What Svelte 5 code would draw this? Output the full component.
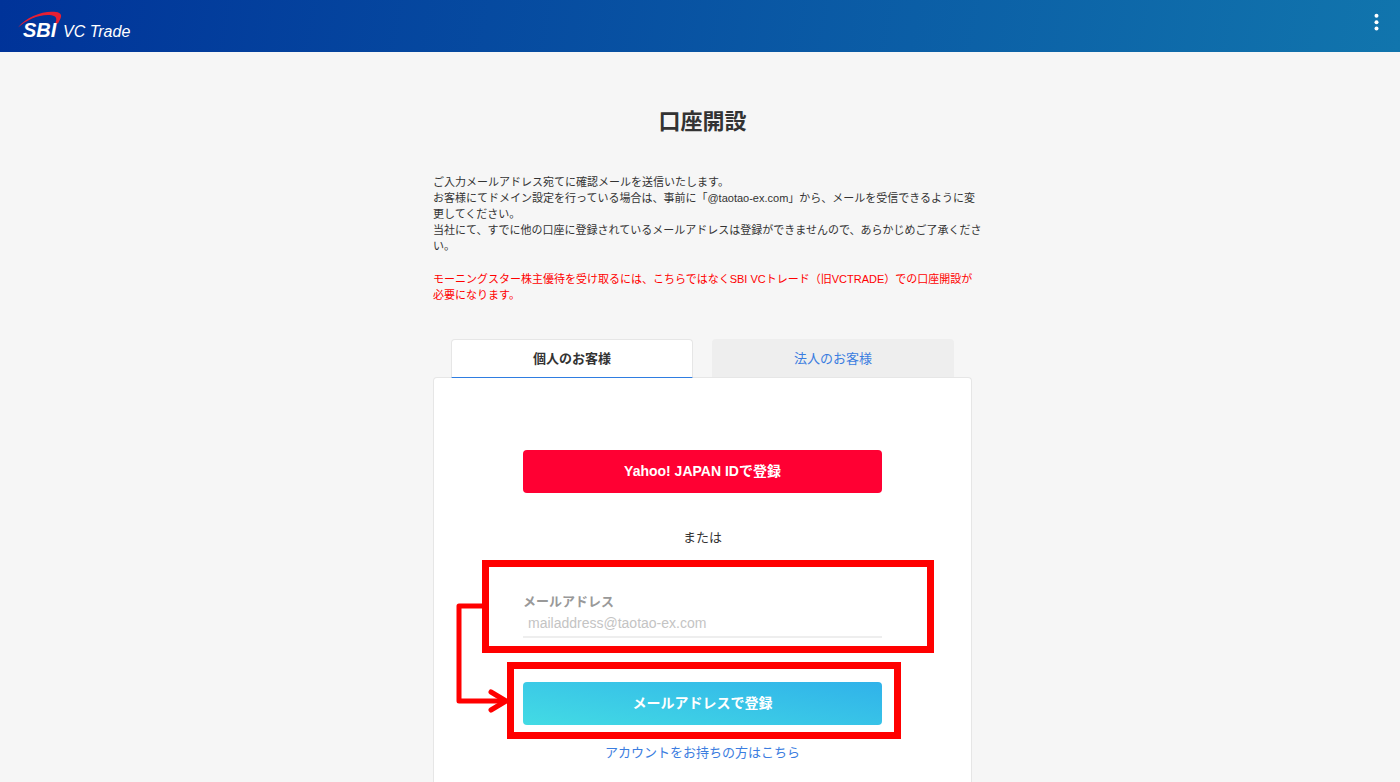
<script>
  let email = $state('');
  let active = $state('personal');

  const tabs = [
    { id: 'personal', label: '個人のお客様' },
    { id: 'corporate', label: '法人のお客様' }
  ];
</script>

<div class="page">
  <header>
    <a class="brand" href="/" aria-label="SBI VC Trade">
      <svg width="114" height="30" viewBox="0 0 114 30" aria-hidden="true">
        <path
          d="M0 16.500C8 6 24 0 36 0.800C42 1.100 44.500 3.500 42.500 7.500L40 12.500H37C39.500 8 38.500 5 33.500 4.200C22 2.800 9 8.500 0 16.500Z"
          fill="#e71f33"
        />
        <text class="logo-mark" x="5" y="26">SBI</text>
        <text class="logo-name" x="45" y="26">VC Trade</text>
      </svg>
    </a>
    <button class="menu" type="button" aria-label="メニュー">
      <svg width="6" height="18" viewBox="0 0 6 18" fill="#fff" aria-hidden="true">
        <circle cx="3.500" cy="2.800" r="2" />
        <circle cx="3.500" cy="9.200" r="2" />
        <circle cx="3.500" cy="15.500" r="2" />
      </svg>
    </button>
  </header>

  <main>
    <h1>口座開設</h1>

    <div class="intro">
      <p>
        ご入力メールアドレス宛てに確認メールを送信いたします。<br />
        お客様にてドメイン設定を行っている場合は、事前に「@taotao-ex.com」から、メールを受信できるように変<br
        />更してください。<br />
        当社にて、すでに他の口座に登録されているメールアドレスは登録ができませんので、あらかじめご了承くださ<br
        />い。
      </p>
      <p class="notice">
        モーニングスター株主優待を受け取るには、こちらではなくSBI VCトレード（旧VCTRADE）での口座開設が<br
        />必要になります。
      </p>
    </div>

    <div class="tabs" role="tablist">
      {#each tabs as tab}
        <button
          type="button"
          role="tab"
          class="tab"
          class:active={active === tab.id}
          aria-selected={active === tab.id}
          onclick={() => (active = tab.id)}
        >
          {tab.label}
        </button>
      {/each}
    </div>

    <form class="panel" onsubmit={(e) => e.preventDefault()}>
      <button class="btn yahoo" type="button">Yahoo! JAPAN IDで登録</button>
      <p class="or">または</p>

      <div class="field">
        <label for="email">メールアドレス</label>
        <input id="email" type="email" placeholder="mailaddress@taotao-ex.com" bind:value={email} />
        <span class="mark mark-field"></span>
        <svg class="arrow" width="56" height="114" viewBox="0 0 56 114" aria-hidden="true">
          <path d="M29 6H6V101H52" />
          <path d="M38 92L53 101L38 110" />
        </svg>
      </div>

      <div class="submit">
        <button class="btn mail" type="submit">メールアドレスで登録</button>
        <span class="mark mark-submit"></span>
      </div>

      <a class="login" href="/login">アカウントをお持ちの方はこちら</a>
    </form>
  </main>
</div>

<style>
  :global(body) {
    margin: 0;
    background: #f6f6f6;
  }

  .page {
    display: flex;
    flex-direction: column;
    min-height: 100vh;
    color: #333;
    font-family: 'Liberation Sans', 'Noto Sans CJK JP', sans-serif;
    font-size: 13px;
  }

  .page :global(*) {
    box-sizing: border-box;
  }

  button,
  input {
    font-family: inherit;
  }

  header {
    display: flex;
    align-items: center;
    justify-content: space-between;
    height: 52px;
    padding: 0 12px 0 18px;
    background: linear-gradient(100deg, #039, #1175ad);
  }

  .brand {
    display: flex;
  }

  .logo-mark {
    fill: #fff;
    font-size: 20px;
    font-weight: bold;
    font-style: italic;
  }

  .logo-name {
    fill: #fff;
    font-size: 16px;
    font-style: italic;
  }

  .menu {
    display: flex;
    justify-content: center;
    width: 24px;
    margin-bottom: 8px;
    padding: 0;
    border: 0;
    background: none;
    cursor: pointer;
  }

  main {
    display: flex;
    flex: 1;
    flex-direction: column;
    width: 100%;
    max-width: 544px;
    margin: 0 auto;
    padding: 55px 0 0 5px;
  }

  h1 {
    margin: 0 0 37px;
    font-size: 22px;
    line-height: 30px;
    text-align: center;
  }

  .intro {
    margin-right: -16px;
    font-size: 11px;
    line-height: 16px;
  }

  .intro p {
    margin: 0;
  }

  .intro .notice {
    margin-top: 17px;
    color: #f00;
  }

  .tabs {
    display: flex;
    gap: 19px;
    margin-top: 36px;
    padding: 0 18px;
  }

  .tab {
    flex: 1;
    height: 38px;
    padding: 0 0 3px;
    border: 1px solid #eee;
    border-bottom: 0;
    border-radius: 4px 4px 0 0;
    background: #eee;
    color: #3b7de0;
    font-size: 13px;
    cursor: pointer;
  }

  .tab.active {
    z-index: 1;
    height: 39px;
    margin-bottom: -1px;
    border-color: #e6e6e6;
    border-bottom: 1px solid #2f7de1;
    background: #fff;
    color: #333;
    font-weight: bold;
  }

  .panel {
    display: flex;
    flex: 1;
    flex-direction: column;
    padding: 72px 89px 20px;
    border: 1px solid #e6e6e6;
    border-bottom: 0;
    border-radius: 4px 4px 0 0;
    background: #fff;
  }

  .btn {
    width: 100%;
    height: 43px;
    padding: 0 0 3px;
    border: 0;
    border-radius: 4px;
    color: #fff;
    font-size: 14px;
    font-weight: bold;
    cursor: pointer;
  }

  .yahoo {
    background: #ff0033;
  }

  .mail {
    display: block;
    background: linear-gradient(10deg, #43dbe4, #30b2ea);
  }

  .or {
    margin: 35px 0 44px;
    line-height: 20px;
    text-align: center;
  }

  .field,
  .submit {
    position: relative;
  }

  .field label {
    display: block;
    color: #999;
    font-weight: bold;
    line-height: 20px;
  }

  .field input {
    display: block;
    width: 100%;
    height: 26px;
    padding: 0 5px 2px;
    border: 0;
    border-bottom: 2px solid #eee;
    outline: 0;
    background: none;
    color: #333;
    font-size: 14px;
  }

  .field input::placeholder {
    color: #c4c4c4;
  }

  .submit {
    margin-top: 44px;
  }

  /* highlight frames drawn over the form */
  .mark {
    position: absolute;
    border: 7px solid #f00;
    pointer-events: none;
  }

  .mark-field {
    inset: -32px -52px -15px -41px;
  }

  .mark-submit {
    inset: -20px -19px -14px -16px;
  }

  .arrow {
    position: absolute;
    top: 8px;
    left: -70px;
    fill: none;
    stroke: #f00;
    stroke-width: 5px;
    stroke-linecap: round;
    stroke-linejoin: round;
    pointer-events: none;
  }

  .login {
    align-self: center;
    margin-top: 18px;
    color: #3b7de0;
    line-height: 20px;
    text-decoration: none;
  }
</style>
